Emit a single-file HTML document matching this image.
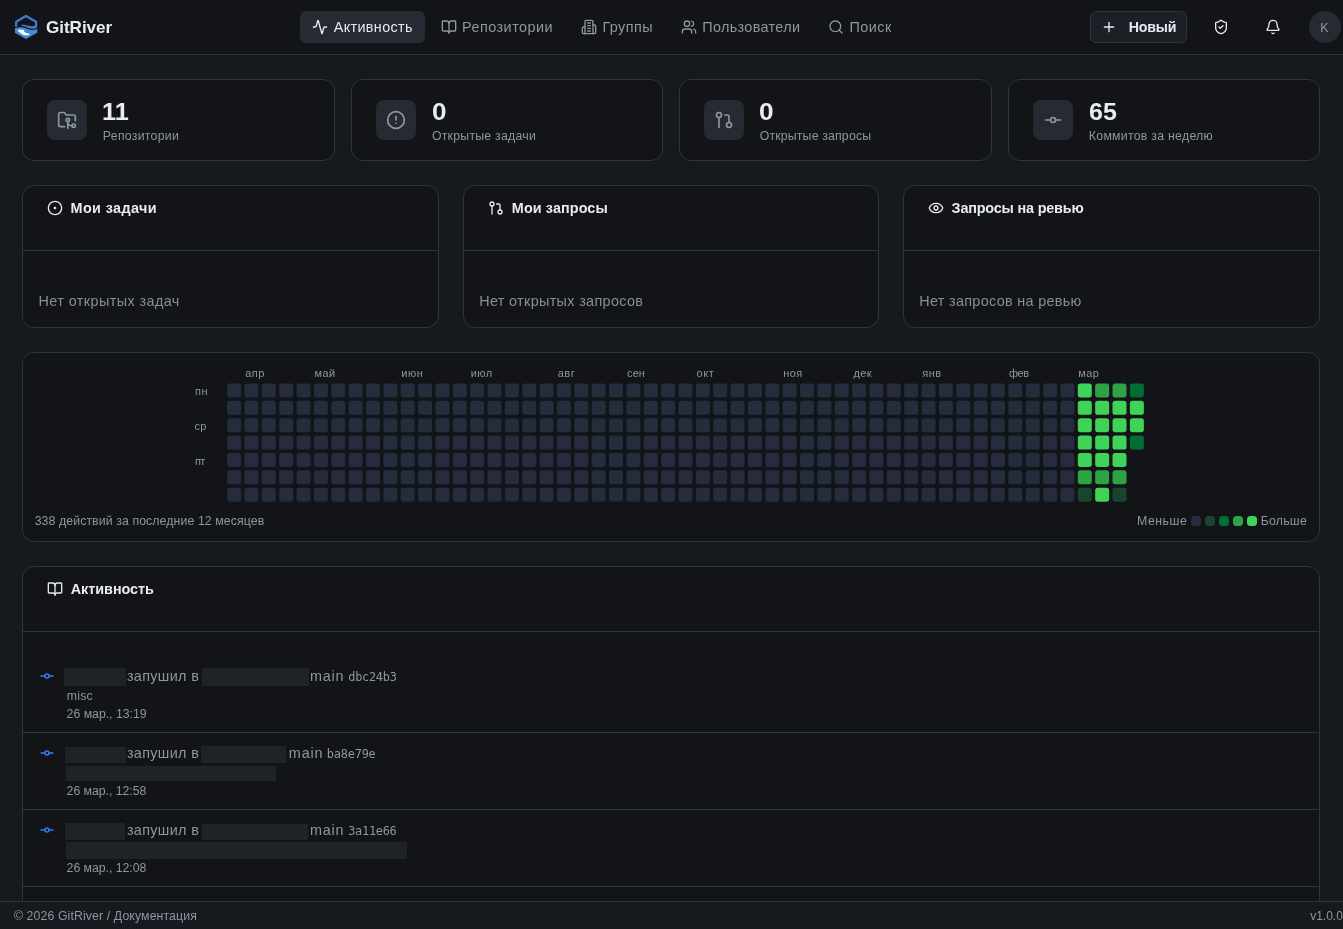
<!DOCTYPE html>
<html lang="ru">
<head>
<meta charset="utf-8">
<title>GitRiver</title>
<style>
*{box-sizing:border-box;margin:0;padding:0}
html,body{width:1343px;height:929px;overflow:hidden}
body{background:#16191e;color:#e6e9ef;font-family:"Liberation Sans",sans-serif;font-size:14px;position:relative}
.app{position:absolute;left:0;top:0;width:1343px;height:929px;overflow:hidden;will-change:transform}
.t{position:absolute;white-space:pre;line-height:40px;display:block}
.ic{position:absolute;display:block;overflow:visible}
.hbg{position:absolute;left:0;top:0;width:1343px;height:55px;background:#131418;border-bottom:1px solid #2f353d}
.lg0{position:absolute;left:10px;top:10px}
.lg0 svg{display:block}
.pill{position:absolute;background:#262a32;border-radius:6px}
.btn{position:absolute;border:1px solid #30343c;border-radius:6px;background:#1c1f25}
.ava{position:absolute;width:32px;height:32px;border-radius:50%;background:#262a32}
.card{position:absolute;background:#131418;border:1px solid #2f353d;border-radius:12px}
.ibox{position:absolute;width:40px;height:40px;border-radius:8px;background:#262a32}
.hr{position:absolute;height:1px;background:#2f353d}
.red{position:absolute;background:#1f2227}
.hm{position:absolute;left:0;top:0;pointer-events:none}
.hm rect{width:14.0px;height:14.0px;rx:2.7px}
.lg{position:absolute;top:516px;width:10px;height:10px;border-radius:3.5px;display:block}
.fbg{position:absolute;left:0;top:901px;width:1343px;height:28px;background:#16191e;border-top:1px solid #2f353d}
</style>
</head>
<body>
<div class="app">
<header><div class="hbg"></div>
<div class="lg0"><svg class="logo" width="36" height="34" viewBox="0 0 36 34">
<path d="M6.1 16.700V11.800L16 6.100l10.100 5.700v4.600" fill="none" stroke="#3e7ccb" stroke-width="2.300" stroke-linejoin="round" stroke-linecap="butt"/>
<path d="M10.600 15.200c1.900-.4 3.400-.4 4.800-.2 1.600.3 2.600.5 3.600.7 2 .4 3.500.5 4.400.4.900-.1 1.500-.5 1.550-1.300l2.300 1.400c0 1.300-.95 2.100-2.350 2.200-1.400.3-2.400.4-2.900.3-1.500-.2-2.500-.5-3.700-.8-1.300-.5-2.500-.9-3.700-1.300-1.400-.5-2.600-1-4-1.400z" fill="#3e7ccb"/>
<path d="M4.950 18.300c2-.7 3.900-1.200 5.650-1.100 1.200.1 2.200.2 3.300.4 1.300.5 2.500 1 3.700 1.400 1.500.5 3 .9 4.400.9 1.200 0 2.300-.1 3.200-.3.800-.2 1.500-.5 2.050-.9V22.700L16 29.100 4.950 22.700z" fill="#4689d6"/>
<path d="M7.500 20.600c.8-.7 1.700-1 2.700-1 1.500 0 3 .2 4.400.6l-1 1.100c.7.500 1.400 1 2.200 1.400 1.500.7 3.100 1 4.700 1.200-1.300.9-2.800 1.500-4.400 1.500-1.800 0-3.500-.9-5.100-2-1.200-.8-2.400-1.800-3.500-2.800z" fill="#fff"/>
</svg></div>
<span class="t" style="left:46.01px;top:8.0px;font-size:17.1px;color:#e8ebf2;font-weight:700;letter-spacing:-0.05px">GitRiver</span>
<nav><div class="pill" style="left:300px;top:11px;width:125px;height:32px"></div>
<svg class="ic" style="left:312px;top:19px;color:#e6e9ef" width="16" height="16" viewBox="0 0 24 24" fill="none" stroke="currentColor" stroke-width="2" stroke-linecap="round" stroke-linejoin="round"><path d="M22 12h-2.48a2 2 0 0 0-1.93 1.46l-2.35 8.36a.25.25 0 0 1-.48 0L9.24 2.18a.25.25 0 0 0-.48 0l-2.35 8.36A2 2 0 0 1 4.49 12H2"/></svg><span class="t" style="left:333.75px;top:7.0px;font-size:14.4px;color:#e6e9ef;letter-spacing:0.35px">Активность</span>
<svg class="ic" style="left:441px;top:19px;color:#8d96a1" width="16" height="16" viewBox="0 0 24 24" fill="none" stroke="currentColor" stroke-width="2" stroke-linecap="round" stroke-linejoin="round"><path d="M12 7v14"/><path d="M3 18a1 1 0 0 1-1-1V4a1 1 0 0 1 1-1h5a4 4 0 0 1 4 4 4 4 0 0 1 4-4h5a1 1 0 0 1 1 1v13a1 1 0 0 1-1 1h-6a3 3 0 0 0-3 3 3 3 0 0 0-3-3z"/></svg><span class="t" style="left:461.98px;top:7.0px;font-size:14.4px;color:#8d96a1;letter-spacing:0.49px">Репозитории</span>
<svg class="ic" style="left:581px;top:19px;color:#8d96a1" width="16" height="16" viewBox="0 0 24 24" fill="none" stroke="currentColor" stroke-width="2" stroke-linecap="round" stroke-linejoin="round"><path d="M6 22V4a2 2 0 0 1 2-2h8a2 2 0 0 1 2 2v18Z"/><path d="M6 12H4a2 2 0 0 0-2 2v6a2 2 0 0 0 2 2h2"/><path d="M18 9h2a2 2 0 0 1 2 2v9a2 2 0 0 1-2 2h-2"/><path d="M10 6h4"/><path d="M10 10h4"/><path d="M10 14h4"/><path d="M10 18h4"/></svg><span class="t" style="left:602.38px;top:7.0px;font-size:14.4px;color:#8d96a1;letter-spacing:0.46px">Группы</span>
<svg class="ic" style="left:681px;top:19px;color:#8d96a1" width="16" height="16" viewBox="0 0 24 24" fill="none" stroke="currentColor" stroke-width="2" stroke-linecap="round" stroke-linejoin="round"><path d="M16 21v-2a4 4 0 0 0-4-4H6a4 4 0 0 0-4 4v2"/><circle cx="9" cy="7" r="4"/><path d="M22 21v-2a4 4 0 0 0-3-3.87"/><path d="M16 3.13a4 4 0 0 1 0 7.75"/></svg><span class="t" style="left:702.29px;top:7.0px;font-size:14.4px;color:#8d96a1;letter-spacing:0.34px">Пользователи</span>
<svg class="ic" style="left:828px;top:19px;color:#8d96a1" width="16" height="16" viewBox="0 0 24 24" fill="none" stroke="currentColor" stroke-width="2" stroke-linecap="round" stroke-linejoin="round"><circle cx="11" cy="11" r="8"/><path d="m21 21-4.3-4.3"/></svg><span class="t" style="left:849.49px;top:7.0px;font-size:14.4px;color:#8d96a1;letter-spacing:0.46px">Поиск</span>
</nav>
<div class="btn" style="left:1090px;top:11px;width:97px;height:32px"></div><svg class="ic" style="left:1101px;top:19px;color:#e6e9ef" width="16" height="16" viewBox="0 0 24 24" fill="none" stroke="currentColor" stroke-width="2" stroke-linecap="round" stroke-linejoin="round"><path d="M5 12h14"/><path d="M12 5v14"/></svg><span class="t" style="left:1128.67px;top:7.0px;font-size:14.2px;color:#e6e9ef;font-weight:700;letter-spacing:-0.15px">Новый</span>
<svg class="ic" style="left:1213px;top:19px;color:#e6e9ef" width="16" height="16" viewBox="0 0 24 24" fill="none" stroke="currentColor" stroke-width="2" stroke-linecap="round" stroke-linejoin="round"><path d="M20 13c0 5-3.5 7.5-7.66 8.95a1 1 0 0 1-.67-.01C7.5 20.5 4 18 4 13V6a1 1 0 0 1 1-1c2 0 4.5-1.2 6.24-2.72a1.17 1.17 0 0 1 1.52 0C14.51 3.81 17 5 19 5a1 1 0 0 1 1 1z"/><path d="m9 12 2 2 4-4"/></svg><svg class="ic" style="left:1265px;top:19px;color:#e6e9ef" width="16" height="16" viewBox="0 0 24 24" fill="none" stroke="currentColor" stroke-width="2" stroke-linecap="round" stroke-linejoin="round"><path d="M10.268 21a2 2 0 0 0 3.464 0"/><path d="M3.262 15.326A1 1 0 0 0 4 17h16a1 1 0 0 0 .74-1.673C19.41 13.956 18 12.499 18 8A6 6 0 0 0 6 8c0 4.499-1.411 5.956-2.738 7.326"/></svg>
<div class="ava" style="left:1309px;top:11px"></div><span class="t" style="left:1320.35px;top:7.5px;font-size:12.4px;color:#8d96a1">K</span>
</header>
<main>
<section><div class="card" style="left:22px;top:79px;width:313px;height:82px"></div><div class="ibox" style="left:47px;top:100px"></div><svg class="ic" style="left:57px;top:110px;color:#8d96a1" width="20" height="20" viewBox="0 0 24 24" fill="none" stroke="currentColor" stroke-width="2" stroke-linecap="round" stroke-linejoin="round"><path d="M9 20H4a2 2 0 0 1-2-2V5a2 2 0 0 1 2-2h3.9a2 2 0 0 1 1.69.9l.81 1.2a2 2 0 0 0 1.67.9H20a2 2 0 0 1 2 2v5"/><circle cx="13" cy="12" r="2"/><path d="M18 19c-2.8 0-5-2.2-5-5v8"/><circle cx="20" cy="19" r="2"/></svg><span class="t" style="left:102.30px;top:92.4px;font-size:23.6px;color:#e8ebf2;transform:scaleX(1.070);transform-origin:0 0;font-weight:700">11</span><span class="t" style="left:102.85px;top:115.7px;font-size:12.3px;color:#8d96a1;letter-spacing:0.27px">Репозитории</span></section>
<section><div class="card" style="left:351px;top:79px;width:312px;height:82px"></div><div class="ibox" style="left:376px;top:100px"></div><svg class="ic" style="left:386px;top:110px;color:#8d96a1" width="20" height="20" viewBox="0 0 24 24" fill="none" stroke="currentColor" stroke-width="2" stroke-linecap="round" stroke-linejoin="round"><circle cx="12" cy="12" r="10"/><line x1="12" x2="12" y1="8" y2="12"/><line x1="12" x2="12.01" y1="16" y2="16"/></svg><span class="t" style="left:431.58px;top:92.4px;font-size:23.6px;color:#e8ebf2;transform:scaleX(1.105);transform-origin:0 0;font-weight:700">0</span><span class="t" style="left:431.93px;top:115.7px;font-size:12.3px;color:#8d96a1;letter-spacing:0.24px">Открытые задачи</span></section>
<section><div class="card" style="left:679px;top:79px;width:313px;height:82px"></div><div class="ibox" style="left:704px;top:100px"></div><svg class="ic" style="left:714px;top:110px;color:#8d96a1" width="20" height="20" viewBox="0 0 24 24" fill="none" stroke="currentColor" stroke-width="2" stroke-linecap="round" stroke-linejoin="round"><circle cx="18" cy="18" r="3"/><circle cx="6" cy="6" r="3"/><path d="M13 6h3a2 2 0 0 1 2 2v7"/><line x1="6" x2="6" y1="9" y2="21"/></svg><span class="t" style="left:759.37px;top:92.4px;font-size:23.6px;color:#e8ebf2;transform:scaleX(1.113);transform-origin:0 0;font-weight:700">0</span><span class="t" style="left:759.73px;top:115.7px;font-size:12.3px;color:#8d96a1;letter-spacing:0.17px">Открытые запросы</span></section>
<section><div class="card" style="left:1008px;top:79px;width:312px;height:82px"></div><div class="ibox" style="left:1033px;top:100px"></div><svg class="ic" style="left:1043px;top:110px;color:#8d96a1" width="20" height="20" viewBox="0 0 24 24" fill="none" stroke="currentColor" stroke-width="2" stroke-linecap="round" stroke-linejoin="round"><circle cx="12" cy="12" r="3"/><line x1="3" x2="9" y1="12" y2="12"/><line x1="15" x2="21" y1="12" y2="12"/></svg><span class="t" style="left:1088.88px;top:92.4px;font-size:23.6px;color:#e8ebf2;transform:scaleX(1.061);transform-origin:0 0;font-weight:700">65</span><span class="t" style="left:1088.85px;top:115.7px;font-size:12.3px;color:#8d96a1;letter-spacing:0.27px">Коммитов за неделю</span></section>
<section><div class="card" style="left:22px;top:185px;width:417px;height:143px"></div><div class="hr" style="left:23px;top:250px;width:415px"></div><svg class="ic" style="left:47px;top:200px;color:#e6e9ef" width="16" height="16" viewBox="0 0 24 24" fill="none" stroke="currentColor" stroke-width="2" stroke-linecap="round" stroke-linejoin="round"><circle cx="12" cy="12" r="10"/><circle cx="12" cy="12" r="1"/></svg><span class="t" style="left:70.56px;top:188.0px;font-size:14.4px;color:#e8ebf2;font-weight:700;letter-spacing:0.39px">Мои задачи</span><span class="t" style="left:38.48px;top:280.9px;font-size:14.4px;color:#868e99;letter-spacing:0.42px">Нет открытых задач</span></section>
<section><div class="card" style="left:463px;top:185px;width:416px;height:143px"></div><div class="hr" style="left:464px;top:250px;width:414px"></div><svg class="ic" style="left:488px;top:200px;color:#e6e9ef" width="16" height="16" viewBox="0 0 24 24" fill="none" stroke="currentColor" stroke-width="2" stroke-linecap="round" stroke-linejoin="round"><circle cx="18" cy="18" r="3"/><circle cx="6" cy="6" r="3"/><path d="M13 6h3a2 2 0 0 1 2 2v7"/><line x1="6" x2="6" y1="9" y2="21"/></svg><span class="t" style="left:511.86px;top:188.0px;font-size:14.4px;color:#e8ebf2;font-weight:700;letter-spacing:0.09px">Мои запросы</span><span class="t" style="left:479.18px;top:280.9px;font-size:14.4px;color:#868e99;letter-spacing:0.34px">Нет открытых запросов</span></section>
<section><div class="card" style="left:903px;top:185px;width:417px;height:143px"></div><div class="hr" style="left:904px;top:250px;width:415px"></div><svg class="ic" style="left:928px;top:200px;color:#e6e9ef" width="16" height="16" viewBox="0 0 24 24" fill="none" stroke="currentColor" stroke-width="2" stroke-linecap="round" stroke-linejoin="round"><path d="M2.062 12.348a1 1 0 0 1 0-.696 10.75 10.75 0 0 1 19.876 0 1 1 0 0 1 0 .696 10.75 10.75 0 0 1-19.876 0"/><circle cx="12" cy="12" r="3"/></svg><span class="t" style="left:951.58px;top:188.0px;font-size:14.4px;color:#e8ebf2;font-weight:700;letter-spacing:-0.18px">Запросы на ревью</span><span class="t" style="left:919.18px;top:280.9px;font-size:14.4px;color:#868e99;letter-spacing:0.32px">Нет запросов на ревью</span></section>
<section><div class="card" style="left:22px;top:352px;width:1298px;height:190px"></div><svg class="hm" width="1343" height="929" viewBox="0 0 1343 929"><g fill="#252d3d"><rect x="227.10" y="383.50"/><rect x="227.10" y="400.86"/><rect x="227.10" y="418.22"/><rect x="227.10" y="435.58"/><rect x="227.10" y="452.94"/><rect x="227.10" y="470.31"/><rect x="227.10" y="487.67"/><rect x="244.46" y="383.50"/><rect x="244.46" y="400.86"/><rect x="244.46" y="418.22"/><rect x="244.46" y="435.58"/><rect x="244.46" y="452.94"/><rect x="244.46" y="470.31"/><rect x="244.46" y="487.67"/><rect x="261.82" y="383.50"/><rect x="261.82" y="400.86"/><rect x="261.82" y="418.22"/><rect x="261.82" y="435.58"/><rect x="261.82" y="452.94"/><rect x="261.82" y="470.31"/><rect x="261.82" y="487.67"/><rect x="279.18" y="383.50"/><rect x="279.18" y="400.86"/><rect x="279.18" y="418.22"/><rect x="279.18" y="435.58"/><rect x="279.18" y="452.94"/><rect x="279.18" y="470.31"/><rect x="279.18" y="487.67"/><rect x="296.54" y="383.50"/><rect x="296.54" y="400.86"/><rect x="296.54" y="418.22"/><rect x="296.54" y="435.58"/><rect x="296.54" y="452.94"/><rect x="296.54" y="470.31"/><rect x="296.54" y="487.67"/><rect x="313.90" y="383.50"/><rect x="313.90" y="400.86"/><rect x="313.90" y="418.22"/><rect x="313.90" y="435.58"/><rect x="313.90" y="452.94"/><rect x="313.90" y="470.31"/><rect x="313.90" y="487.67"/><rect x="331.27" y="383.50"/><rect x="331.27" y="400.86"/><rect x="331.27" y="418.22"/><rect x="331.27" y="435.58"/><rect x="331.27" y="452.94"/><rect x="331.27" y="470.31"/><rect x="331.27" y="487.67"/><rect x="348.63" y="383.50"/><rect x="348.63" y="400.86"/><rect x="348.63" y="418.22"/><rect x="348.63" y="435.58"/><rect x="348.63" y="452.94"/><rect x="348.63" y="470.31"/><rect x="348.63" y="487.67"/><rect x="365.99" y="383.50"/><rect x="365.99" y="400.86"/><rect x="365.99" y="418.22"/><rect x="365.99" y="435.58"/><rect x="365.99" y="452.94"/><rect x="365.99" y="470.31"/><rect x="365.99" y="487.67"/><rect x="383.35" y="383.50"/><rect x="383.35" y="400.86"/><rect x="383.35" y="418.22"/><rect x="383.35" y="435.58"/><rect x="383.35" y="452.94"/><rect x="383.35" y="470.31"/><rect x="383.35" y="487.67"/><rect x="400.71" y="383.50"/><rect x="400.71" y="400.86"/><rect x="400.71" y="418.22"/><rect x="400.71" y="435.58"/><rect x="400.71" y="452.94"/><rect x="400.71" y="470.31"/><rect x="400.71" y="487.67"/><rect x="418.07" y="383.50"/><rect x="418.07" y="400.86"/><rect x="418.07" y="418.22"/><rect x="418.07" y="435.58"/><rect x="418.07" y="452.94"/><rect x="418.07" y="470.31"/><rect x="418.07" y="487.67"/><rect x="435.43" y="383.50"/><rect x="435.43" y="400.86"/><rect x="435.43" y="418.22"/><rect x="435.43" y="435.58"/><rect x="435.43" y="452.94"/><rect x="435.43" y="470.31"/><rect x="435.43" y="487.67"/><rect x="452.79" y="383.50"/><rect x="452.79" y="400.86"/><rect x="452.79" y="418.22"/><rect x="452.79" y="435.58"/><rect x="452.79" y="452.94"/><rect x="452.79" y="470.31"/><rect x="452.79" y="487.67"/><rect x="470.15" y="383.50"/><rect x="470.15" y="400.86"/><rect x="470.15" y="418.22"/><rect x="470.15" y="435.58"/><rect x="470.15" y="452.94"/><rect x="470.15" y="470.31"/><rect x="470.15" y="487.67"/><rect x="487.51" y="383.50"/><rect x="487.51" y="400.86"/><rect x="487.51" y="418.22"/><rect x="487.51" y="435.58"/><rect x="487.51" y="452.94"/><rect x="487.51" y="470.31"/><rect x="487.51" y="487.67"/><rect x="504.88" y="383.50"/><rect x="504.88" y="400.86"/><rect x="504.88" y="418.22"/><rect x="504.88" y="435.58"/><rect x="504.88" y="452.94"/><rect x="504.88" y="470.31"/><rect x="504.88" y="487.67"/><rect x="522.24" y="383.50"/><rect x="522.24" y="400.86"/><rect x="522.24" y="418.22"/><rect x="522.24" y="435.58"/><rect x="522.24" y="452.94"/><rect x="522.24" y="470.31"/><rect x="522.24" y="487.67"/><rect x="539.60" y="383.50"/><rect x="539.60" y="400.86"/><rect x="539.60" y="418.22"/><rect x="539.60" y="435.58"/><rect x="539.60" y="452.94"/><rect x="539.60" y="470.31"/><rect x="539.60" y="487.67"/><rect x="556.96" y="383.50"/><rect x="556.96" y="400.86"/><rect x="556.96" y="418.22"/><rect x="556.96" y="435.58"/><rect x="556.96" y="452.94"/><rect x="556.96" y="470.31"/><rect x="556.96" y="487.67"/><rect x="574.32" y="383.50"/><rect x="574.32" y="400.86"/><rect x="574.32" y="418.22"/><rect x="574.32" y="435.58"/><rect x="574.32" y="452.94"/><rect x="574.32" y="470.31"/><rect x="574.32" y="487.67"/><rect x="591.68" y="383.50"/><rect x="591.68" y="400.86"/><rect x="591.68" y="418.22"/><rect x="591.68" y="435.58"/><rect x="591.68" y="452.94"/><rect x="591.68" y="470.31"/><rect x="591.68" y="487.67"/><rect x="609.04" y="383.50"/><rect x="609.04" y="400.86"/><rect x="609.04" y="418.22"/><rect x="609.04" y="435.58"/><rect x="609.04" y="452.94"/><rect x="609.04" y="470.31"/><rect x="609.04" y="487.67"/><rect x="626.40" y="383.50"/><rect x="626.40" y="400.86"/><rect x="626.40" y="418.22"/><rect x="626.40" y="435.58"/><rect x="626.40" y="452.94"/><rect x="626.40" y="470.31"/><rect x="626.40" y="487.67"/><rect x="643.76" y="383.50"/><rect x="643.76" y="400.86"/><rect x="643.76" y="418.22"/><rect x="643.76" y="435.58"/><rect x="643.76" y="452.94"/><rect x="643.76" y="470.31"/><rect x="643.76" y="487.67"/><rect x="661.12" y="383.50"/><rect x="661.12" y="400.86"/><rect x="661.12" y="418.22"/><rect x="661.12" y="435.58"/><rect x="661.12" y="452.94"/><rect x="661.12" y="470.31"/><rect x="661.12" y="487.67"/><rect x="678.49" y="383.50"/><rect x="678.49" y="400.86"/><rect x="678.49" y="418.22"/><rect x="678.49" y="435.58"/><rect x="678.49" y="452.94"/><rect x="678.49" y="470.31"/><rect x="678.49" y="487.67"/><rect x="695.85" y="383.50"/><rect x="695.85" y="400.86"/><rect x="695.85" y="418.22"/><rect x="695.85" y="435.58"/><rect x="695.85" y="452.94"/><rect x="695.85" y="470.31"/><rect x="695.85" y="487.67"/><rect x="713.21" y="383.50"/><rect x="713.21" y="400.86"/><rect x="713.21" y="418.22"/><rect x="713.21" y="435.58"/><rect x="713.21" y="452.94"/><rect x="713.21" y="470.31"/><rect x="713.21" y="487.67"/><rect x="730.57" y="383.50"/><rect x="730.57" y="400.86"/><rect x="730.57" y="418.22"/><rect x="730.57" y="435.58"/><rect x="730.57" y="452.94"/><rect x="730.57" y="470.31"/><rect x="730.57" y="487.67"/><rect x="747.93" y="383.50"/><rect x="747.93" y="400.86"/><rect x="747.93" y="418.22"/><rect x="747.93" y="435.58"/><rect x="747.93" y="452.94"/><rect x="747.93" y="470.31"/><rect x="747.93" y="487.67"/><rect x="765.29" y="383.50"/><rect x="765.29" y="400.86"/><rect x="765.29" y="418.22"/><rect x="765.29" y="435.58"/><rect x="765.29" y="452.94"/><rect x="765.29" y="470.31"/><rect x="765.29" y="487.67"/><rect x="782.65" y="383.50"/><rect x="782.65" y="400.86"/><rect x="782.65" y="418.22"/><rect x="782.65" y="435.58"/><rect x="782.65" y="452.94"/><rect x="782.65" y="470.31"/><rect x="782.65" y="487.67"/><rect x="800.01" y="383.50"/><rect x="800.01" y="400.86"/><rect x="800.01" y="418.22"/><rect x="800.01" y="435.58"/><rect x="800.01" y="452.94"/><rect x="800.01" y="470.31"/><rect x="800.01" y="487.67"/><rect x="817.37" y="383.50"/><rect x="817.37" y="400.86"/><rect x="817.37" y="418.22"/><rect x="817.37" y="435.58"/><rect x="817.37" y="452.94"/><rect x="817.37" y="470.31"/><rect x="817.37" y="487.67"/><rect x="834.74" y="383.50"/><rect x="834.74" y="400.86"/><rect x="834.74" y="418.22"/><rect x="834.74" y="435.58"/><rect x="834.74" y="452.94"/><rect x="834.74" y="470.31"/><rect x="834.74" y="487.67"/><rect x="852.10" y="383.50"/><rect x="852.10" y="400.86"/><rect x="852.10" y="418.22"/><rect x="852.10" y="435.58"/><rect x="852.10" y="452.94"/><rect x="852.10" y="470.31"/><rect x="852.10" y="487.67"/><rect x="869.46" y="383.50"/><rect x="869.46" y="400.86"/><rect x="869.46" y="418.22"/><rect x="869.46" y="435.58"/><rect x="869.46" y="452.94"/><rect x="869.46" y="470.31"/><rect x="869.46" y="487.67"/><rect x="886.82" y="383.50"/><rect x="886.82" y="400.86"/><rect x="886.82" y="418.22"/><rect x="886.82" y="435.58"/><rect x="886.82" y="452.94"/><rect x="886.82" y="470.31"/><rect x="886.82" y="487.67"/><rect x="904.18" y="383.50"/><rect x="904.18" y="400.86"/><rect x="904.18" y="418.22"/><rect x="904.18" y="435.58"/><rect x="904.18" y="452.94"/><rect x="904.18" y="470.31"/><rect x="904.18" y="487.67"/><rect x="921.54" y="383.50"/><rect x="921.54" y="400.86"/><rect x="921.54" y="418.22"/><rect x="921.54" y="435.58"/><rect x="921.54" y="452.94"/><rect x="921.54" y="470.31"/><rect x="921.54" y="487.67"/><rect x="938.90" y="383.50"/><rect x="938.90" y="400.86"/><rect x="938.90" y="418.22"/><rect x="938.90" y="435.58"/><rect x="938.90" y="452.94"/><rect x="938.90" y="470.31"/><rect x="938.90" y="487.67"/><rect x="956.26" y="383.50"/><rect x="956.26" y="400.86"/><rect x="956.26" y="418.22"/><rect x="956.26" y="435.58"/><rect x="956.26" y="452.94"/><rect x="956.26" y="470.31"/><rect x="956.26" y="487.67"/><rect x="973.62" y="383.50"/><rect x="973.62" y="400.86"/><rect x="973.62" y="418.22"/><rect x="973.62" y="435.58"/><rect x="973.62" y="452.94"/><rect x="973.62" y="470.31"/><rect x="973.62" y="487.67"/><rect x="990.98" y="383.50"/><rect x="990.98" y="400.86"/><rect x="990.98" y="418.22"/><rect x="990.98" y="435.58"/><rect x="990.98" y="452.94"/><rect x="990.98" y="470.31"/><rect x="990.98" y="487.67"/><rect x="1008.35" y="383.50"/><rect x="1008.35" y="400.86"/><rect x="1008.35" y="418.22"/><rect x="1008.35" y="435.58"/><rect x="1008.35" y="452.94"/><rect x="1008.35" y="470.31"/><rect x="1008.35" y="487.67"/><rect x="1025.71" y="383.50"/><rect x="1025.71" y="400.86"/><rect x="1025.71" y="418.22"/><rect x="1025.71" y="435.58"/><rect x="1025.71" y="452.94"/><rect x="1025.71" y="470.31"/><rect x="1025.71" y="487.67"/><rect x="1043.07" y="383.50"/><rect x="1043.07" y="400.86"/><rect x="1043.07" y="418.22"/><rect x="1043.07" y="435.58"/><rect x="1043.07" y="452.94"/><rect x="1043.07" y="470.31"/><rect x="1043.07" y="487.67"/><rect x="1060.43" y="383.50"/><rect x="1060.43" y="400.86"/><rect x="1060.43" y="418.22"/><rect x="1060.43" y="435.58"/><rect x="1060.43" y="452.94"/><rect x="1060.43" y="470.31"/><rect x="1060.43" y="487.67"/></g><g><rect x="1077.79" y="383.50" fill="#3fd358"/><rect x="1077.79" y="400.86" fill="#3fd358"/><rect x="1077.79" y="418.22" fill="#3fd358"/><rect x="1077.79" y="435.58" fill="#3fd358"/><rect x="1077.79" y="452.94" fill="#3fd358"/><rect x="1077.79" y="470.31" fill="#2ca444"/><rect x="1077.79" y="487.67" fill="#19452e"/><rect x="1095.15" y="383.50" fill="#2ca444"/><rect x="1095.15" y="400.86" fill="#3fd358"/><rect x="1095.15" y="418.22" fill="#3fd358"/><rect x="1095.15" y="435.58" fill="#3fd358"/><rect x="1095.15" y="452.94" fill="#3fd358"/><rect x="1095.15" y="470.31" fill="#2ca444"/><rect x="1095.15" y="487.67" fill="#3fd358"/><rect x="1112.51" y="383.50" fill="#2ca444"/><rect x="1112.51" y="400.86" fill="#3fd358"/><rect x="1112.51" y="418.22" fill="#3fd358"/><rect x="1112.51" y="435.58" fill="#3fd358"/><rect x="1112.51" y="452.94" fill="#3fd358"/><rect x="1112.51" y="470.31" fill="#2ca444"/><rect x="1112.51" y="487.67" fill="#19452e"/><rect x="1129.87" y="383.50" fill="#006d32"/><rect x="1129.87" y="400.86" fill="#3fd358"/><rect x="1129.87" y="418.22" fill="#3fd358"/><rect x="1129.87" y="435.58" fill="#006d32"/></g></svg>
<span class="t" style="left:245.17px;top:353.0px;font-size:11.0px;color:#8d96a1;letter-spacing:0.47px">апр</span>
<span class="t" style="left:314.41px;top:353.0px;font-size:11.0px;color:#8d96a1;letter-spacing:0.43px">май</span>
<span class="t" style="left:401.21px;top:353.0px;font-size:11.0px;color:#8d96a1;letter-spacing:0.6px">июн</span>
<span class="t" style="left:470.66px;top:353.0px;font-size:11.0px;color:#8d96a1;letter-spacing:0.45px">июл</span>
<span class="t" style="left:557.67px;top:353.0px;font-size:11.0px;color:#8d96a1;letter-spacing:0.52px">авг</span>
<span class="t" style="left:627.10px;top:353.0px;font-size:11.0px;color:#8d96a1;letter-spacing:0.04px">сен</span>
<span class="t" style="left:696.54px;top:353.0px;font-size:11.0px;color:#8d96a1;letter-spacing:0.56px">окт</span>
<span class="t" style="left:783.15px;top:353.0px;font-size:11.0px;color:#8d96a1;letter-spacing:0.41px">ноя</span>
<span class="t" style="left:853.40px;top:353.0px;font-size:11.0px;color:#8d96a1;letter-spacing:0.45px">дек</span>
<span class="t" style="left:922.27px;top:353.0px;font-size:11.0px;color:#8d96a1;letter-spacing:0.53px">янв</span>
<span class="t" style="left:1009.06px;top:353.0px;font-size:11.0px;color:#8d96a1;letter-spacing:-0.51px">фев</span>
<span class="t" style="left:1078.29px;top:353.0px;font-size:11.0px;color:#8d96a1;letter-spacing:0.43px">мар</span>
<span class="t" style="left:195.00px;top:371.0px;font-size:11.0px;color:#8d96a1;letter-spacing:0.53px">пн</span>
<span class="t" style="left:194.49px;top:405.8px;font-size:11.0px;color:#8d96a1;letter-spacing:0.2px">ср</span>
<span class="t" style="left:195.00px;top:440.8px;font-size:11.0px;color:#8d96a1;letter-spacing:-0.6px">пт</span>
<span class="t" style="left:34.64px;top:500.9px;font-size:12.3px;color:#8d96a1;letter-spacing:0.1px">338 действий за последние 12 месяцев</span><span class="t" style="left:1137.05px;top:500.8px;font-size:12.3px;color:#8d96a1;letter-spacing:0.52px">Меньше</span><i class="lg" style="left:1191px;background:#252d3d"></i><i class="lg" style="left:1205px;background:#19452e"></i><i class="lg" style="left:1219px;background:#006d32"></i><i class="lg" style="left:1233px;background:#2ca444"></i><i class="lg" style="left:1247px;background:#3fd358"></i><span class="t" style="left:1260.65px;top:500.8px;font-size:12.3px;color:#8d96a1;letter-spacing:0.23px">Больше</span></section>
<section><div class="card" style="left:22px;top:566px;width:1298px;height:420px"></div><div class="hr" style="left:23px;top:631px;width:1296px"></div><svg class="ic" style="left:47px;top:581px;color:#e6e9ef" width="16" height="16" viewBox="0 0 24 24" fill="none" stroke="currentColor" stroke-width="2" stroke-linecap="round" stroke-linejoin="round"><path d="M12 7v14"/><path d="M3 18a1 1 0 0 1-1-1V4a1 1 0 0 1 1-1h5a4 4 0 0 1 4 4 4 4 0 0 1 4-4h5a1 1 0 0 1 1 1v13a1 1 0 0 1-1 1h-6a3 3 0 0 0-3 3 3 3 0 0 0-3-3z"/></svg><span class="t" style="left:70.75px;top:568.9px;font-size:14.4px;color:#e8ebf2;font-weight:700;letter-spacing:-0.04px">Активность</span>
<article><svg class="ic" style="left:39px;top:668px;color:#317cf3" width="16" height="16" viewBox="0 0 24 24" fill="none" stroke="currentColor" stroke-width="2.3" stroke-linecap="round" stroke-linejoin="round"><circle cx="12" cy="12" r="3"/><line x1="3" x2="9" y1="12" y2="12"/><line x1="15" x2="21" y1="12" y2="12"/></svg><div class="red" style="left:64px;top:668.2px;width:62.0px;height:17.4px"></div><span class="t" style="left:126.92px;top:655.9px;font-size:14.4px;color:#8d96a1;letter-spacing:0.34px">запушил в</span><div class="red" style="left:202px;top:668px;width:107.2px;height:17.7px"></div><span class="t" style="left:309.95px;top:655.9px;font-size:14.4px;color:#8d96a1;letter-spacing:0.83px">main</span><span class="t" style="left:348.31px;top:656.9px;font-size:11.9px;color:#8d96a1;letter-spacing:-0.27px;font-family:'DejaVu Sans Mono','Liberation Mono',monospace">dbc24b3</span><span class="t" style="left:66.76px;top:675.9px;font-size:12.3px;color:#8d96a1;letter-spacing:0.25px">misc</span><span class="t" style="left:66.60px;top:693.6px;font-size:12.3px;color:#8d96a1;letter-spacing:-0.02px">26 мар., 13:19</span><div class="hr" style="left:23px;top:732px;width:1296px"></div></article>
<article><svg class="ic" style="left:39px;top:745px;color:#317cf3" width="16" height="16" viewBox="0 0 24 24" fill="none" stroke="currentColor" stroke-width="2.3" stroke-linecap="round" stroke-linejoin="round"><circle cx="12" cy="12" r="3"/><line x1="3" x2="9" y1="12" y2="12"/><line x1="15" x2="21" y1="12" y2="12"/></svg><div class="red" style="left:65px;top:746.9px;width:61.0px;height:15.8px"></div><span class="t" style="left:126.92px;top:732.9px;font-size:14.4px;color:#8d96a1;letter-spacing:0.34px">запушил в</span><div class="red" style="left:201.2px;top:745.8px;width:84.7px;height:16.9px"></div><span class="t" style="left:288.85px;top:732.9px;font-size:14.4px;color:#8d96a1;letter-spacing:0.86px">main</span><span class="t" style="left:326.79px;top:733.9px;font-size:11.9px;color:#8d96a1;letter-spacing:-0.19px;font-family:'DejaVu Sans Mono','Liberation Mono',monospace">ba8e79e</span><div class="red" style="left:66px;top:765.8px;width:209.9px;height:14.9px"></div><span class="t" style="left:66.60px;top:770.6px;font-size:12.3px;color:#8d96a1;letter-spacing:-0.04px">26 мар., 12:58</span><div class="hr" style="left:23px;top:809px;width:1296px"></div></article>
<article><svg class="ic" style="left:39px;top:822px;color:#317cf3" width="16" height="16" viewBox="0 0 24 24" fill="none" stroke="currentColor" stroke-width="2.3" stroke-linecap="round" stroke-linejoin="round"><circle cx="12" cy="12" r="3"/><line x1="3" x2="9" y1="12" y2="12"/><line x1="15" x2="21" y1="12" y2="12"/></svg><div class="red" style="left:65px;top:823.2px;width:59.9px;height:16.5px"></div><span class="t" style="left:126.92px;top:809.9px;font-size:14.4px;color:#8d96a1;letter-spacing:0.34px">запушил в</span><div class="red" style="left:202px;top:824px;width:106.0px;height:15.7px"></div><span class="t" style="left:309.95px;top:809.9px;font-size:14.4px;color:#8d96a1;letter-spacing:0.83px">main</span><span class="t" style="left:348.19px;top:810.9px;font-size:11.9px;color:#8d96a1;letter-spacing:-0.26px;font-family:'DejaVu Sans Mono','Liberation Mono',monospace">3a11e66</span><div class="red" style="left:66px;top:842px;width:341.1px;height:16.8px"></div><span class="t" style="left:66.60px;top:847.6px;font-size:12.3px;color:#8d96a1;letter-spacing:-0.04px">26 мар., 12:08</span><div class="hr" style="left:23px;top:886px;width:1296px"></div></article>
</section></main>
<footer><div class="fbg"></div><span class="t" style="left:13.93px;top:895.8px;font-size:12.3px;color:#8d96a1;letter-spacing:0.11px">© 2026 GitRiver / Документация</span><span class="t" style="left:1310.15px;top:895.9px;font-size:12.0px;color:#8d96a1">v1.0.0</span></footer>
</div>
</body>
</html>
